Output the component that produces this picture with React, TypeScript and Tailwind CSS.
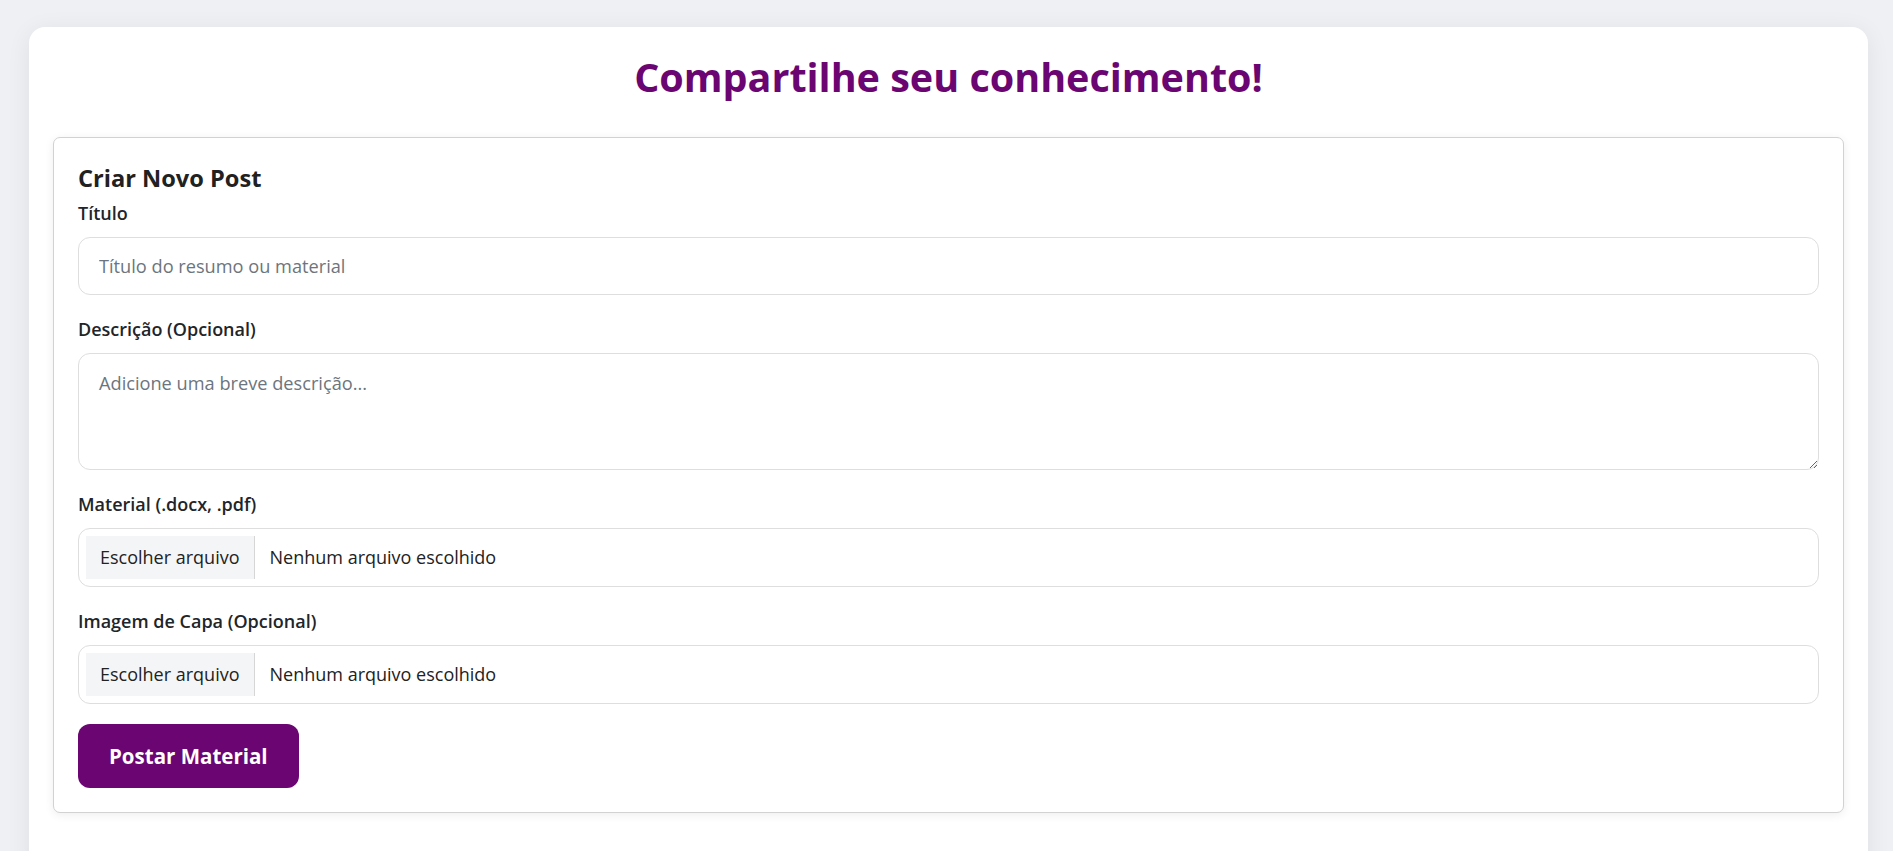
import React from "react";

function FileField({ label }: { label: string }) {
  return (
    <div className="mb-[20px]">
      <label className="block text-[18px] leading-[28px] font-semibold text-[#212529] mb-[10px]">{label}</label>
      <div className="h-[59px] border border-[#dedede] rounded-[12px] p-[7px] flex items-center bg-white">
        <span className="h-full flex items-center px-[14px] bg-[#f4f5f7] border-r border-[#d6d6d6] text-[18px] text-[#222]">
          Escolher arquivo
        </span>
        <span className="ml-[15px] text-[18px] text-[#222]">Nenhum arquivo escolhido</span>
      </div>
    </div>
  );
}

export default function App() {
  return (
    <div className="min-h-screen bg-[#eff0f4] pt-[27px] font-['Open_Sans',sans-serif] overflow-hidden">
      <div className="ml-[29px] mr-[25px] bg-white rounded-[16px] shadow-[0_4px_24px_rgba(0,0,0,0.07)] pt-[27px] px-[24px] pb-[80px]">
        <h1 className="text-center text-[39.5px] leading-[1.2] font-bold text-[#6a0572] mb-[36px]">
          Compartilhe seu conhecimento!
        </h1>
        <div className="border border-[#d2d2d2] rounded-[7px] bg-white shadow-[0_2px_10px_rgba(0,0,0,0.07)] px-[24px] pt-[25px] pb-[24px]">
          <h2 className="text-[23.6px] leading-[30px] font-bold text-[#212121] mb-[6px]">Criar Novo Post</h2>
          <div className="mb-[20px]">
            <label className="block text-[18px] leading-[28px] font-semibold text-[#212529] mb-[10px]">Título</label>
            <input
              type="text"
              placeholder="Título do resumo ou material"
              className="w-full h-[58px] border border-[#dedede] rounded-[12px] px-[20px] text-[18.2px] text-[#222] placeholder:text-[#6c757d] outline-none bg-white"
            />
          </div>
          <div className="mb-[20px]">
            <label className="block text-[18px] leading-[28px] font-semibold text-[#212529] mb-[10px]">Descrição (Opcional)</label>
            <textarea
              placeholder="Adicione uma breve descrição..."
              className="block w-full h-[117px] border border-[#dedede] rounded-[12px] px-[20px] py-[16px] text-[18.2px] leading-[27px] text-[#222] placeholder:text-[#6c757d] outline-none bg-white"
            />
          </div>
          <FileField label="Material (.docx, .pdf)" />
          <FileField label="Imagem de Capa (Opcional)" />
          <button className="h-[64px] px-[31px] rounded-[12px] bg-[#6a0572] text-white text-[20.5px] font-bold">
            Postar Material
          </button>
        </div>
      </div>
    </div>
  );
}
